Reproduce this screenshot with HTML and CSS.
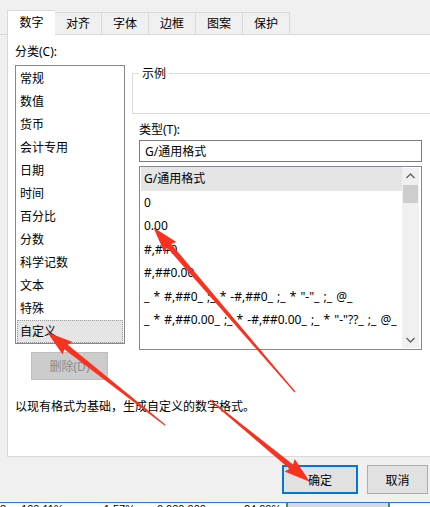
FILE: index.html
```html
<!DOCTYPE html>
<html lang="zh-CN">
<head>
    <meta charset="UTF-8">
    <meta name="viewport" content="width=device-width, initial-scale=1.0">
    <title>设置单元格格式</title>
    <link rel="stylesheet" href="styles.css">
</head>
<body>
    <div class="dialog">
        <div class="tabs">
            <div class="tab active">数字</div>
            <div class="tab">对齐</div>
            <div class="tab">字体</div>
            <div class="tab">边框</div>
            <div class="tab">图案</div>
            <div class="tab">保护</div>
        </div>

        <div class="panel">
            <div class="left-col">
                <div class="label">分类(C):</div>
                <ul class="category-list">
                    <li>常规</li>
                    <li>数值</li>
                    <li>货币</li>
                    <li>会计专用</li>
                    <li>日期</li>
                    <li>时间</li>
                    <li>百分比</li>
                    <li>分数</li>
                    <li>科学记数</li>
                    <li>文本</li>
                    <li>特殊</li>
                    <li class="selected">自定义</li>
                </ul>
                <button class="delete-btn" disabled>删除(D)</button>
            </div>

            <div class="right-col">
                <div class="sample">
                    <span class="sample-title">示例</span>
                </div>
                <div class="label type-label">类型(T):</div>
                <input class="type-input" type="text" value="G/通用格式">
                <div class="format-box">
                    <ul class="format-list">
                        <li class="selected">G/通用格式</li>
                        <li>0</li>
                        <li>0.00</li>
                        <li>#,##0</li>
                        <li>#,##0.00</li>
                        <li>_ * #,##0_ ;_ * -#,##0_ ;_ * "-"_ ;_ @_</li>
                        <li>_ * #,##0.00_ ;_ * -#,##0.00_ ;_ * "-"??_ ;_ @_</li>
                    </ul>
                    <div class="scrollbar">
                        <svg class="scroll-arrow" width="17" height="17" viewBox="0 0 17 17">
                            <path d="M4.5 10 L8.5 6 L12.5 10" fill="none" stroke="#606060" stroke-width="1.3"/>
                        </svg>
                        <div class="thumb"></div>
                        <div class="scroll-track"></div>
                        <svg class="scroll-arrow" width="17" height="17" viewBox="0 0 17 17">
                            <path d="M4.5 7 L8.5 11 L12.5 7" fill="none" stroke="#606060" stroke-width="1.3"/>
                        </svg>
                    </div>
                </div>
            </div>

            <p class="desc">以现有格式为基础，生成自定义的数字格式。</p>
        </div>

        <div class="buttons">
            <button class="btn ok-btn">确定</button>
            <button class="btn">取消</button>
        </div>
    </div>

    <div class="sheet-strip">
        <span class="c1">8</span>
        <span class="c2">100.11%</span>
        <span class="c3">1.57%</span>
        <span class="c4">0.000.000</span>
        <span class="c5">24.00%</span>
        <span class="bar"></span>
    </div>

    <!-- red annotation arrows drawn over the dialog -->
    <svg class="arrows" width="430" height="507" viewBox="0 0 430 507">
        <g fill="#f8321f">
            <path transform="translate(165 425) rotate(218.25)" d="M0 -0.6 L126 -2.8 L124 -8 L150 0 L124 8 L126 2.8 L0 0.6 Z"/>
            <path transform="translate(295 392) rotate(229.28)" d="M0 -0.6 L193 -2.8 L191 -8 L217 0 L191 8 L193 2.8 L0 0.6 Z"/>
            <path transform="translate(210 400) rotate(39.35)" d="M0 -0.6 L105 -2.8 L103 -8 L129 0 L103 8 L105 2.8 L0 0.6 Z"/>
        </g>
    </svg>
</body>
</html>
```

FILE: styles.css
```css
html, body {
    margin: 0;
    padding: 0;
}
body {
    width: 430px;
    height: 507px;
    overflow: hidden;
    position: relative;
    background-color: #f0f0f0;
    font-family: "Noto Sans", "Noto Sans CJK SC", sans-serif;
    font-size: 12px;
    color: #000;
}
.dialog {
    width: 440px;
}
.tabs {
    display: flex;
    align-items: flex-end;
    height: 34px;
    padding-left: 7px;
    border-bottom: 1px solid #d9d9d9;
}
.tab {
    height: 21px;
    line-height: 21px;
    width: 46px;
    text-align: center;
    border: 1px solid #d9d9d9;
    border-bottom: none;
    border-left: none;
    background-color: #f0f0f0;
}
.tab.active {
    width: 47px;
    height: 24px;
    line-height: 24px;
    margin-bottom: -1px;
    background-color: white;
    border-left: 1px solid #d9d9d9;
    border-right: none;
}
.panel {
    box-sizing: border-box;
    height: 422px;
    margin-left: 7px;
    padding-left: 7px;
    background-color: white;
    border-left: 1px solid #d9d9d9;
    border-bottom: 1px solid #d9d9d9;
    display: grid;
    grid-template-columns: 110px 1fr;
    align-content: start;
    align-items: start;
    column-gap: 7px;
}
.label {
    line-height: 14px;
    height: 14px;
}
.left-col .label {
    margin-top: 10px;
}
.category-list {
    list-style: none;
    box-sizing: border-box;
    height: 279px;
    margin: 6px 0 0 0;
    padding: 1px 1px 0 1px;
    border: 1px solid #828790;
}
.category-list li {
    height: 23px;
    line-height: 23px;
    padding-left: 3px;
}
.category-list li.selected {
    background-color: #e5e5e5;
    outline: 1px dotted #9a9a9a;
    outline-offset: -1px;
}
.delete-btn {
    display: block;
    box-sizing: border-box;
    width: 77px;
    height: 28px;
    margin: 8px 0 0 16px;
    padding: 0;
    font-family: inherit;
    font-size: 12px;
    color: #8a8a8a;
    background-color: #cccccc;
    border: 1px solid #bfbfbf;
}
.right-col {
    display: flex;
    flex-direction: column;
}
.sample {
    box-sizing: border-box;
    height: 41px;
    margin-top: 38px;
    border: 1px solid #dcdcdc;
    border-right: none;
}
.sample-title {
    display: inline-block;
    margin: -7px 0 0 6px;
    padding: 0 3px;
    line-height: 14px;
    background-color: white;
    vertical-align: top;
}
.type-label {
    margin-top: 9px;
    padding-left: 7px;
}
.type-input {
    box-sizing: border-box;
    width: 283px;
    height: 22px;
    margin: 3px 0 0 7px;
    padding: 0 0 0 5px;
    font-family: inherit;
    font-size: 12px;
    color: #000;
    border: 1px solid #7a7a7a;
    outline: none;
}
.format-box {
    box-sizing: border-box;
    width: 283px;
    height: 184px;
    margin: 4px 0 0 7px;
    padding: 0 1px 1px 1px;
    border: 1px solid #828790;
    display: flex;
    justify-content: space-between;
}
.format-list {
    list-style: none;
    margin: 0;
    padding: 0;
    width: 261px;
    overflow: hidden;
}
.format-list li {
    height: 23.5px;
    line-height: 23.5px;
    padding-left: 3px;
    white-space: nowrap;
    word-spacing: 1px;
}
.format-list li.selected {
    background-color: #e5e5e5;
}
.scrollbar {
    width: 17px;
    margin: 1px 1px 0 0;
    background-color: #f0f0f0;
    display: flex;
    flex-direction: column;
}
.scroll-arrow {
    display: block;
    flex: none;
}
.thumb {
    height: 18px;
    margin: 0 1px;
    background-color: #cdcdcd;
}
.scroll-track {
    flex: 1;
}
.desc {
    grid-column: 1 / 3;
    margin: 20px 0 0 0;
    line-height: 14px;
}
.buttons {
    display: flex;
    justify-content: flex-end;
    gap: 9px;
    width: 428px;
    margin-top: 8px;
}
.btn {
    box-sizing: border-box;
    width: 61px;
    height: 29px;
    padding: 0;
    font-family: inherit;
    font-size: 12px;
    color: #000;
    background-color: #e1e1e1;
    border: 1px solid #adadad;
}
.ok-btn {
    width: 76px;
    border: 2px solid #0078d7;
}
.sheet-strip {
    position: relative;
    height: 4px;
    margin-top: 8px;
    border-top: 1px solid #2b7cd3;
    background-color: white;
    overflow: hidden;
    font-family: "Liberation Sans", Arial, sans-serif;
    font-size: 11px;
    line-height: 12px;
    white-space: nowrap;
    display: flex;
}
.sheet-strip span {
    flex: none;
}
.c2 { margin-left: 15px; }
.c3 { margin-left: 40px; }
.c4 { margin-left: 22px; }
.c5 { margin-left: 38px; }
.sheet-strip .bar {
    box-sizing: border-box;
    width: 104px;
    height: 4px;
    margin-left: 5px;
    background-color: #d9d9d9;
    border-left: 2px solid #2ea043;
    border-right: 2px solid #2ea043;
}
.arrows {
    position: absolute;
    left: 0;
    top: 0;
    pointer-events: none;
}
```
